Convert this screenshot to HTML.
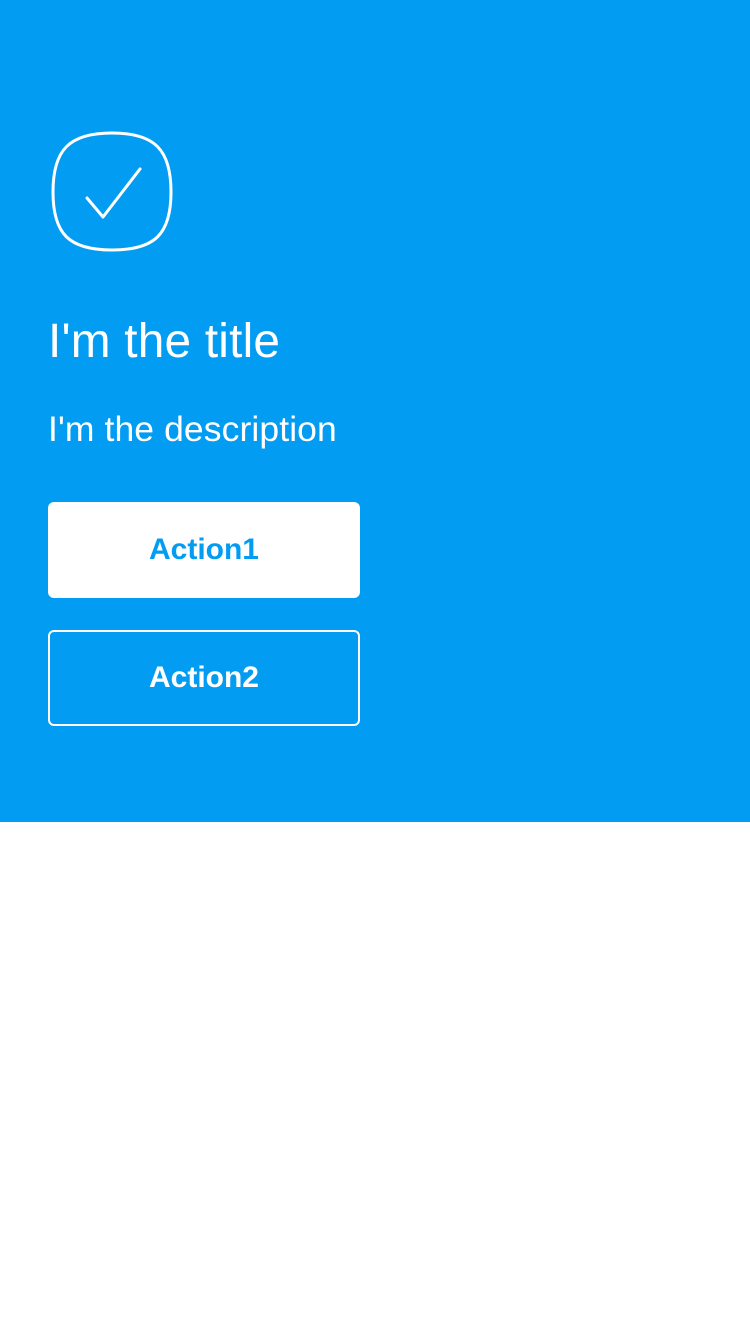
<!DOCTYPE html>
<html><head><style>
body{margin:0;width:750px;height:1334px;background:#fff;font-family:"Liberation Sans",sans-serif;position:relative;overflow:hidden}
.top{position:absolute;left:0;top:0;width:750px;height:822px;background:#039cf3}
.t{position:absolute;left:48px;color:#fff;white-space:nowrap}
.b{position:absolute;left:48px;width:312px;height:96px;box-sizing:border-box;border-radius:6px;text-align:center;line-height:96px;font-size:30px;font-weight:bold}
</style></head><body>
<div class="top">
<svg style="position:absolute;left:0;top:0" width="750" height="300">
<path d="M112 133 C155 133 171 150 171 192 C171 234 155 250 112 250 C69 250 53 234 53 192 C53 150 69 133 112 133 Z" fill="none" stroke="#fff" stroke-width="3"/>
<path d="M87 198 L103 217 L140 169" fill="none" stroke="#fff" stroke-width="3" stroke-linecap="round" stroke-linejoin="round"/>
</svg>
<div class="t" style="top:314px;font-size:47.8px;line-height:56px;letter-spacing:0.2px">I'm the title</div>
<div class="t" style="top:408px;font-size:35.5px;line-height:42px;letter-spacing:0.1px">I'm the description</div>
<div class="b" style="top:502px;background:#fff;color:#039cf3">Action1</div>
<div class="b" style="top:630px;border:2px solid #fff;color:#fff;line-height:92px">Action2</div>
</div>
</body></html>
